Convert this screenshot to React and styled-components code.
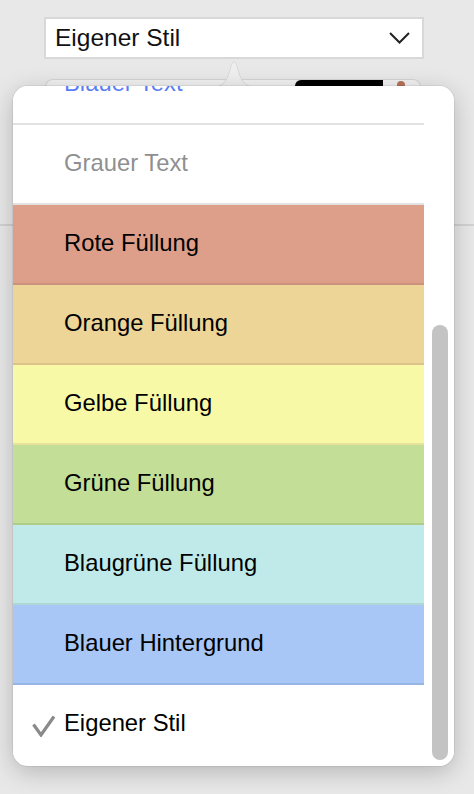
import React from "react";
import styled, { createGlobalStyle } from "styled-components";

const Global = createGlobalStyle`
  html, body { margin: 0; padding: 0; }
  body {
    background: #e8e8e8;
    font-family: "Liberation Sans", Arial, sans-serif;
  }
`;

const Page = styled.div`
  position: relative;
  width: 474px;
  height: 794px;
  overflow: hidden;
  background: #e8e8e8;
  display: flex;
  flex-direction: column;
  padding-top: 17px;
  box-sizing: border-box;
`;

const Select = styled.div`
  margin-left: 44px;
  width: 380px;
  height: 42px;
  box-sizing: border-box;
  border: 2px solid #d8d8d8;
  background: #fff;
  display: flex;
  align-items: center;
  justify-content: space-between;
  padding: 0 12px 0 9px;
  font-size: 24.5px;
  color: #111;
`;

const BackPanel = styled.div`
  margin: 20px 0 0 45px;
  width: 376px;
  height: 60px;
  background: #f1f1f1;
  border: 1px solid #d4d4d4;
  border-bottom: none;
  border-radius: 8px 8px 0 0;
  display: flex;
  align-items: flex-start;
  padding-left: 249px;
  box-sizing: border-box;
`;

const Swatch = styled.div`
  width: 88px;
  height: 30px;
  background: #000;
  border-radius: 6px 0 0 0;
`;

const Dot = styled.div`
  width: 8px;
  height: 8px;
  margin: 1px 0 0 14px;
  border-radius: 50%;
  background: #b6725a;
`;

const Divider = styled.div`
  margin-top: 85px;
  height: 2px;
  background: #d2d2d2;
`;

const Arrow = styled.svg`
  position: absolute;
  left: 213px;
  top: 60px;
  z-index: 2;
`;

const Popover = styled.div`
  position: absolute;
  top: 86px;
  left: 13px;
  width: 441px;
  height: 680px;
  background: #fff;
  border-radius: 15px;
  overflow: hidden;
  box-shadow: 0 6px 24px rgba(0, 0, 0, 0.22), 0 0 0 1px rgba(0, 0, 0, 0.06);
  display: flex;
  z-index: 3;
`;

const List = styled.div`
  width: 411px;
  margin-top: -41px;
  display: flex;
  flex-direction: column;
`;

const Row = styled.div`
  position: relative;
  height: 80px;
  box-sizing: border-box;
  border-bottom: 2px solid ${(p) => p.$line};
  background: ${(p) => p.$bg};
  color: ${(p) => p.$color || "#000"};
  font-size: 23.8px;
  display: flex;
  align-items: center;
  padding: 0 0 3px 51px;
`;

const Check = styled.svg`
  position: absolute;
  left: 19px;
  top: 30px;
`;

const Track = styled.div`
  width: 30px;
  background: #fff;
  padding: 239px 0 0 8px;
  box-sizing: border-box;
`;

const Thumb = styled.div`
  width: 16px;
  height: 435px;
  border-radius: 8px;
  background: #c3c3c3;
`;

const rows = [
  { label: "Blauer Text", bg: "#fff", line: "#e2e2e2", color: "#5a7df6" },
  { label: "Grauer Text", bg: "#fff", line: "#e2e2e2", color: "#8f8f8f" },
  { label: "Rote Füllung", bg: "#dd9f89", line: "#cc917d" },
  { label: "Orange Füllung", bg: "#edd497", line: "#dcc38a" },
  { label: "Gelbe Füllung", bg: "#f8f9a6", line: "#e6e39a" },
  { label: "Grüne Füllung", bg: "#c3de96", line: "#b1cc89" },
  { label: "Blaugrüne Füllung", bg: "#bfeae9", line: "#aed7d6" },
  { label: "Blauer Hintergrund", bg: "#a8c6f6", line: "#97b5e5" },
  { label: "Eigener Stil", bg: "#fff", line: "#fff", checked: true },
];

export default function App() {
  return (
    <Page>
      <Global />
      <Select>
        <span>Eigener Stil</span>
        <svg width="21" height="12" viewBox="0 0 21 12">
          <path d="M1 1 L10.5 10.5 L20 1" fill="none" stroke="#222" strokeWidth="2" />
        </svg>
      </Select>
      <BackPanel>
        <Swatch />
        <Dot />
      </BackPanel>
      <Divider />
      <Arrow width="42" height="28" viewBox="0 0 42 28">
        <path
          d="M0 27 C10 27 14 21 17 10 C18.5 3 20 2 21 2 C22 2 23.5 3 25 10 C28 21 32 27 42 27 Z"
          fill="#efefef"
          stroke="#d9d9d9"
          strokeWidth="1"
        />
      </Arrow>
      <Popover>
        <List>
          {rows.map((r) => (
            <Row key={r.label} $bg={r.bg} $line={r.line} $color={r.color}>
              {r.checked && (
                <Check width="24" height="22" viewBox="0 0 24 22">
                  <path d="M1.5 9.5 L9 20 L22 1.5" fill="none" stroke="#8a8a8a" strokeWidth="3.2" />
                </Check>
              )}
              {r.label}
            </Row>
          ))}
        </List>
        <Track>
          <Thumb />
        </Track>
      </Popover>
    </Page>
  );
}
